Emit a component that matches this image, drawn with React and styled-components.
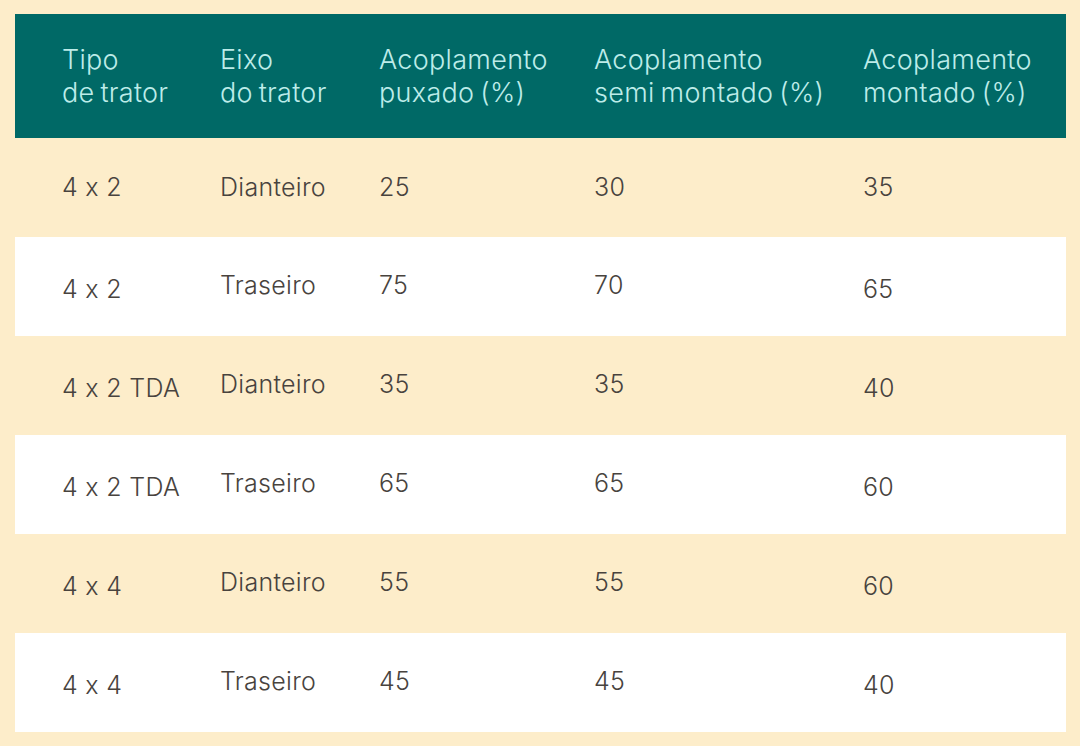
import React from 'react';
import styled, { createGlobalStyle } from 'styled-components';

const GlobalStyle = createGlobalStyle`
  html, body {
    margin: 0;
    padding: 0;
    background: #fdedca;
  }
  body {
    font-family: Inter, "Open Sans", "Liberation Sans", sans-serif;
    font-feature-settings: "calt" 0;
  }
`;

const Page = styled.div`
  width: 1080px;
  height: 746px;
  box-sizing: border-box;
  padding: 14px 14px 0 15px;
  background: #fdedca;
`;

const Table = styled.div`
  display: flex;
  flex-direction: column;
`;

const Row = styled.div`
  display: grid;
  grid-template-columns: 158px 159px 215px 269px 1fr;
  align-items: center;
  padding-left: 47px;
  height: ${(p) => (p.$head ? 124 : 99)}px;
  background: ${(p) => (p.$head ? '#006966' : p.$white ? '#ffffff' : '#fdedca')};
`;

const HeadCell = styled.div`
  color: #bdece9;
  font-size: 27px;
  font-weight: 300;
  line-height: 33px;
  letter-spacing: 0.3px;
  word-spacing: -2px;
  white-space: nowrap;
`;

const Cell = styled.div`
  color: #48433e;
  font-size: 25px;
  font-weight: 300;
  letter-spacing: 0.3px;
  white-space: nowrap;
  padding-top: ${(p) => (p.$shift > 0 ? p.$shift * 2 : 0)}px;
  padding-bottom: ${(p) => (p.$shift < 0 ? -p.$shift * 2 : 0)}px;
`;

const headers = [
  ['Tipo', 'de trator'],
  ['Eixo', 'do trator'],
  ['Acoplamento', 'puxado (%)'],
  ['Acoplamento', 'semi montado (%)'],
  ['Acoplamento', 'montado (%)'],
];

const rows = [
  ['4 x 2', 'Dianteiro', '25', '30', '35'],
  ['4 x 2', 'Traseiro', '75', '70', '65'],
  ['4 x 2 TDA', 'Dianteiro', '35', '35', '40'],
  ['4 x 2 TDA', 'Traseiro', '65', '65', '60'],
  ['4 x 4', 'Dianteiro', '55', '55', '60'],
  ['4 x 4', 'Traseiro', '45', '45', '40'],
];

// the source sits its first and last columns a few px lower than the middle ones
const shiftFor = (row, col) => {
  if (row === 0) return -1;
  return col === 0 || col === 4 ? 2 : -2;
};

export default function App() {
  return (
    <Page>
      <GlobalStyle />
      <Table>
        <Row $head>
          {headers.map(([a, b], i) => (
            <HeadCell key={i}>
              {a}
              <br />
              {b}
            </HeadCell>
          ))}
        </Row>
        {rows.map((r, i) => (
          <Row key={i} $white={i % 2 === 1}>
            {r.map((v, j) => (
              <Cell key={j} $shift={shiftFor(i, j)}>
                {v}
              </Cell>
            ))}
          </Row>
        ))}
      </Table>
    </Page>
  );
}
